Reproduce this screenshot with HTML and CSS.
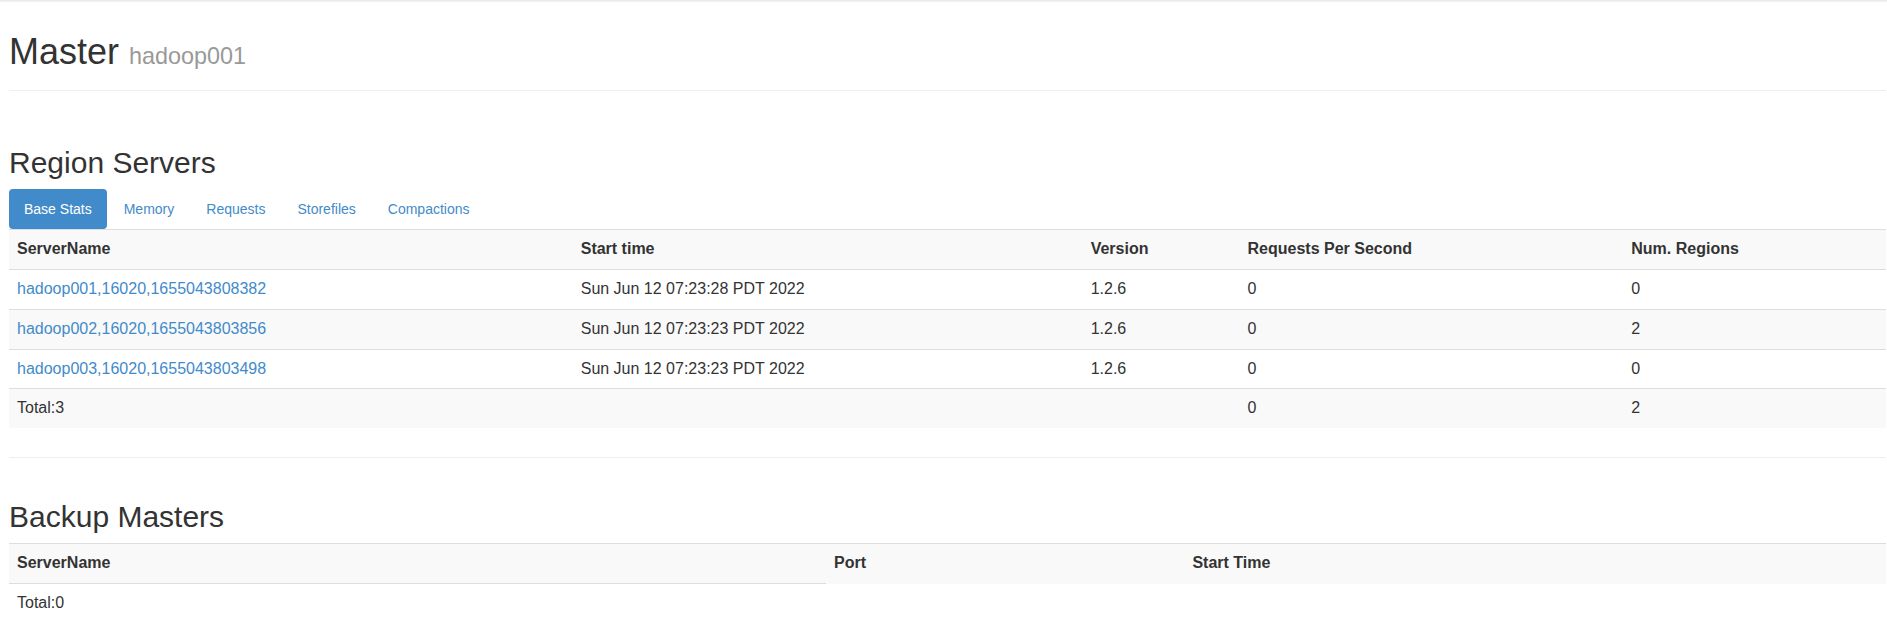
FILE: index.html
```html
<!DOCTYPE html>
<html lang="en">
<head>
<meta charset="utf-8">
<title>Master: hadoop001</title>
<link rel="stylesheet" href="styles.css">
</head>
<body>
<div class="topbar"></div>
<div class="content">
  <div class="page-header">
    <h1>Master <small>hadoop001</small></h1>
  </div>

  <section>
    <h2>Region Servers</h2>
    <ul class="pills">
      <li><a class="pill active" href="#tab_baseStats">Base Stats</a></li>
      <li><a class="pill" href="#tab_memoryStats">Memory</a></li>
      <li><a class="pill" href="#tab_requestStats">Requests</a></li>
      <li><a class="pill" href="#tab_storeStats">Storefiles</a></li>
      <li><a class="pill" href="#tab_compactStats">Compactions</a></li>
    </ul>
    <table class="table">
      <tbody>
        <tr>
          <th>ServerName</th>
          <th>Start time</th>
          <th>Version</th>
          <th>Requests Per Second</th>
          <th>Num. Regions</th>
        </tr>
        <tr>
          <td><a href="#">hadoop001,16020,1655043808382</a></td>
          <td>Sun Jun 12 07:23:28 PDT 2022</td>
          <td>1.2.6</td>
          <td>0</td>
          <td>0</td>
        </tr>
        <tr>
          <td><a href="#">hadoop002,16020,1655043803856</a></td>
          <td>Sun Jun 12 07:23:23 PDT 2022</td>
          <td>1.2.6</td>
          <td>0</td>
          <td>2</td>
        </tr>
        <tr>
          <td><a href="#">hadoop003,16020,1655043803498</a></td>
          <td>Sun Jun 12 07:23:23 PDT 2022</td>
          <td>1.2.6</td>
          <td>0</td>
          <td>0</td>
        </tr>
        <tr>
          <td>Total:3</td>
          <td></td>
          <td></td>
          <td>0</td>
          <td>2</td>
        </tr>
      </tbody>
    </table>
  </section>

  <hr class="divider">

  <section>
    <h2 class="h2-backup">Backup Masters</h2>
    <table class="table">
      <tbody>
        <tr>
          <th>ServerName</th>
          <th>Port</th>
          <th>Start Time</th>
        </tr>
        <tr>
          <td>Total:0</td>
        </tr>
      </tbody>
    </table>
  </section>
</div>
</body>
</html>
```

FILE: styles.css
```css
html, body {
  margin: 0;
  padding: 0;
  background: #fff;
}

body {
  font-family: "Liberation Sans", Arial, Helvetica, sans-serif;
  font-size: 16px;
  line-height: 1.428571;
  color: #333;
}

.topbar {
  height: 3px;
  background: linear-gradient(to bottom, #e6e6e6, #f6f6f6 60%, #ffffff);
}

.content {
  padding: 0 1px 0 9px;
}

.page-header {
  padding-bottom: 18px;
  border-bottom: 1px solid #eee;
}

h1 {
  margin: 29px 0 0;
  font-size: 36px;
  font-weight: 500;
  line-height: 40px;
  color: #333;
}

h1 small {
  font-size: 65%;
  font-weight: normal;
  line-height: 1;
  color: #999;
}

h2 {
  margin: 55px 0 10px;
  font-size: 30px;
  font-weight: 500;
  line-height: 33px;
  color: #333;
}

h2.h2-backup {
  margin-top: 42px;
}

.pills {
  display: flex;
  gap: 2px;
  list-style: none;
  margin: 0;
  padding: 0;
}

.pill {
  display: block;
  padding: 10px 15px;
  font-size: 14px;
  line-height: 20px;
  color: #428bca;
  text-decoration: none;
  border-radius: 4px;
}

.pill.active {
  background: #428bca;
  color: #fff;
}

.table {
  width: 100%;
  border-collapse: collapse;
  border-spacing: 0;
}

.table th,
.table td {
  padding: 8px;
  text-align: left;
  vertical-align: top;
  line-height: 1.428571;
  border-top: 1px solid #ddd;
}

.table th {
  font-weight: bold;
}

.table tr:nth-child(odd) {
  background: #f9f9f9;
}

.table a {
  color: #428bca;
  text-decoration: none;
}

.divider {
  margin: 29px 0 0;
  border: 0;
  border-top: 1px solid #eee;
  height: 0;
}
```
